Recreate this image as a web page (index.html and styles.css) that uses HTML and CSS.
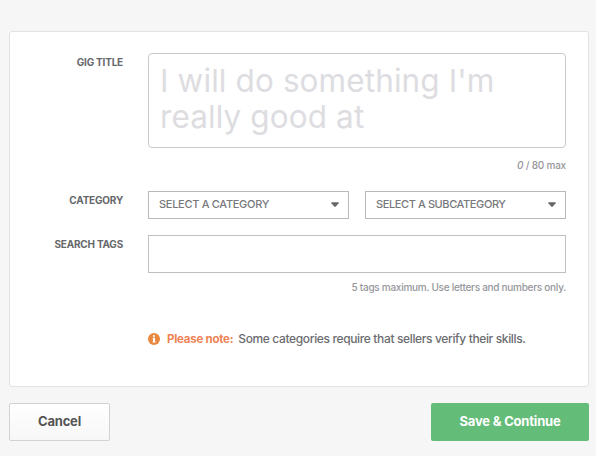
FILE: index.html
```html
<!DOCTYPE html>
<html lang="en">
<head>
    <meta charset="UTF-8">
    <meta name="viewport" content="width=device-width, initial-scale=1.0">
    <title>Create a Gig</title>
    <link rel="stylesheet" href="styles.css">
</head>
<body>
    <form class="gig-form">
        <div class="panel">
            <div class="row title-row">
                <label class="label" for="title">GIG TITLE</label>
                <div class="field">
                    <textarea class="title-input" id="title" maxlength="80" placeholder="I will do something I'm really good at"></textarea>
                    <p class="hint counter"><em>0</em> / 80 max</p>
                </div>
            </div>
            <div class="row category-row">
                <label class="label" for="category">CATEGORY</label>
                <div class="field selects">
                    <div class="select-wrap">
                        <select class="select" id="category">
                            <option>SELECT A CATEGORY</option>
                        </select>
                        <svg class="arrow" width="8" height="5" viewBox="0 0 8 5"><path d="M.4.3h7.2v1L4.6 4.7H3.4L.4 1.3z" fill="#666"/></svg>
                    </div>
                    <div class="select-wrap">
                        <select class="select sub" id="subcategory">
                            <option>SELECT A SUBCATEGORY</option>
                        </select>
                        <svg class="arrow" width="8" height="5" viewBox="0 0 8 5"><path d="M.4.3h7.2v1L4.6 4.7H3.4L.4 1.3z" fill="#666"/></svg>
                    </div>
                </div>
            </div>
            <div class="row">
                <label class="label" for="tags">SEARCH TAGS</label>
                <div class="field">
                    <input class="tags-input" id="tags" type="text">
                    <p class="hint tags-hint">5 tags maximum. Use letters and numbers only.</p>
                </div>
            </div>
            <div class="note">
                <svg class="info" width="12" height="12" viewBox="0 0 12 12">
                    <circle cx="6" cy="6" r="6" fill="#e8893f"/>
                    <path d="M5 2.2h2v1.5H5zM4.6 4.8H7v3.7h.6v1H4.5v-1H5V5.8h-.4z" fill="#fff"/>
                </svg>
                <strong class="note-title">Please note:</strong>
                <span class="note-text">Some categories require that sellers verify their skills.</span>
            </div>
        </div>
        <div class="actions">
            <button class="btn cancel" type="button">Cancel</button>
            <button class="btn save" type="button">Save &amp; Continue</button>
        </div>
    </form>
</body>
</html>
```
FILE: styles.css
```css
* {
    margin: 0;
    padding: 0;
    box-sizing: border-box;
}

body {
    background-color: #f6f6f6;
    font-family: Inter, "Liberation Sans", sans-serif;
    color: #6b6c70;
}

.gig-form {
    width: 580px;
    margin: 31px 0 0 9px;
}

.panel {
    height: 356px;
    padding: 21px 22px 0 0;
    background-color: #fff;
    border: 1px solid #e2e2e2;
    border-radius: 3px;
}

.row {
    display: flex;
}

.label {
    width: 138px;
    padding: 3px 25px 0 0;
    font-size: 10px;
    font-weight: 700;
    line-height: 12px;
    letter-spacing: -0.2px;
    text-align: right;
    color: #66676b;
}

.field {
    width: 418px;
}

.title-row {
    height: 138px;
}

.title-input {
    display: block;
    width: 100%;
    height: 95px;
    padding: 9px 11px;
    border: 1px solid #c9c9c9;
    border-radius: 4px;
    outline: none;
    resize: none;
    overflow: hidden;
    font-family: inherit;
    font-size: 31.5px;
    letter-spacing: 0.1px;
    line-height: 36px;
}

.title-input::placeholder {
    color: #dddde1;
}

.hint {
    font-size: 10px;
    font-weight: 500;
    line-height: 12px;
    letter-spacing: -0.27px;
    text-align: right;
    color: #96979b;
}

.counter {
    margin-top: 11px;
    letter-spacing: -0.2px;
}

.category-row {
    height: 44px;
}

.selects {
    display: flex;
    gap: 16px;
}

.select-wrap {
    position: relative;
    width: 201px;
    height: 28px;
}

.select {
    width: 100%;
    height: 100%;
    padding: 0 10px 2px;
    appearance: none;
    border: 1px solid #b9b9b9;
    border-radius: 0;
    background-color: #fff;
    font-family: inherit;
    font-size: 11px;
    font-weight: 500;
    letter-spacing: -0.3px;
    color: #77787c;
}

.sub {
    letter-spacing: -0.4px;
}

.arrow {
    position: absolute;
    top: 11px;
    right: 10px;
    pointer-events: none;
}

.tags-input {
    display: block;
    width: 100%;
    height: 38px;
    padding: 0 10px;
    border: 1px solid #c0c0c0;
    outline: none;
}

.tags-hint {
    margin-top: 8px;
}

.note {
    display: flex;
    align-items: center;
    margin: 38px 0 0 138px;
    font-size: 12px;
    line-height: 16px;
}

.note-title {
    margin: 0 5px 0 7px;
    font-size: 11.5px;
    letter-spacing: -0.25px;
    color: #ee8354;
}

.note-text {
    font-weight: 500;
    letter-spacing: -0.36px;
}

.actions {
    display: flex;
    justify-content: space-between;
    margin-top: 16px;
}

.btn {
    height: 38px;
    padding-bottom: 2px;
    border-radius: 2px;
    font-family: inherit;
    font-size: 13px;
    font-weight: 700;
    letter-spacing: -0.2px;
    cursor: pointer;
}

.cancel {
    width: 101px;
    border: 1px solid #d2d2d2;
    background: linear-gradient(#fff, #f7f7f7);
    color: #555;
}

.save {
    width: 158px;
    border: none;
    background-color: #63bc78;
    color: #fff;
}
```
